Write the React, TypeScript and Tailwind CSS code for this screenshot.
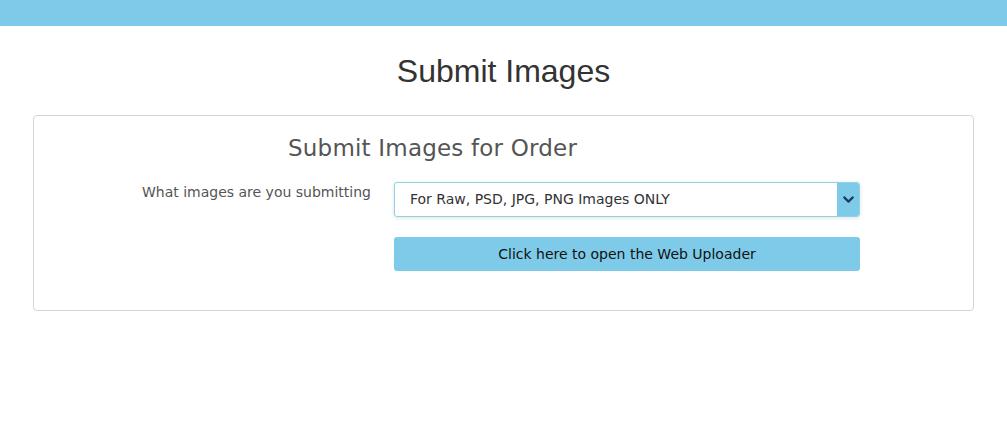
import { ChevronDown } from 'lucide-react';

export default function App() {
  return (
    <div className="min-h-[448px] bg-white" style={{ fontFamily: '"DejaVu Sans", sans-serif' }}>
      <div className="h-[26px] bg-[#7ecbe9]" />

      <h1
        className="mt-[26px] text-center text-[32px] leading-[38px] text-[#333]"
        style={{ fontFamily: '"Liberation Sans", Arial, sans-serif' }}
      >
        Submit Images
      </h1>

      <div className="mx-[33px] mt-[25px] h-[196px] rounded border border-[#d4d4d4]">
        <h2 className="ml-[254px] mt-[17px] text-[23px] leading-[30px] tracking-[0.2px] text-[#555]">
          Submit Images for Order
        </h2>

        <div className="mt-[19px] flex">
          <label className="w-[337px] pt-[2px] text-right text-[14px] leading-[17px] text-[#555]">
            What images are you submitting
          </label>
          <div className="ml-[23px] w-[466px]">
            <div className="flex h-[35px] overflow-hidden rounded-[3px] border border-[#8fd0ea] shadow-[0_1px_4px_rgba(0,0,0,0.12)]">
              <div className="flex flex-1 items-center pl-[15px] text-[14px] text-[#333]">
                For Raw, PSD, JPG, PNG Images ONLY
              </div>
              <div className="flex w-[22px] items-center justify-center bg-[#7ecbe9]">
                <ChevronDown size={17} strokeWidth={3} className="text-[#1e3a5c]" />
              </div>
            </div>
            <button className="mt-[20px] flex h-[34px] w-full items-center justify-center rounded-[3px] bg-[#7ecbe9] text-[14px] text-[#111]">
              Click here to open the Web Uploader
            </button>
          </div>
        </div>
      </div>
    </div>
  );
}
